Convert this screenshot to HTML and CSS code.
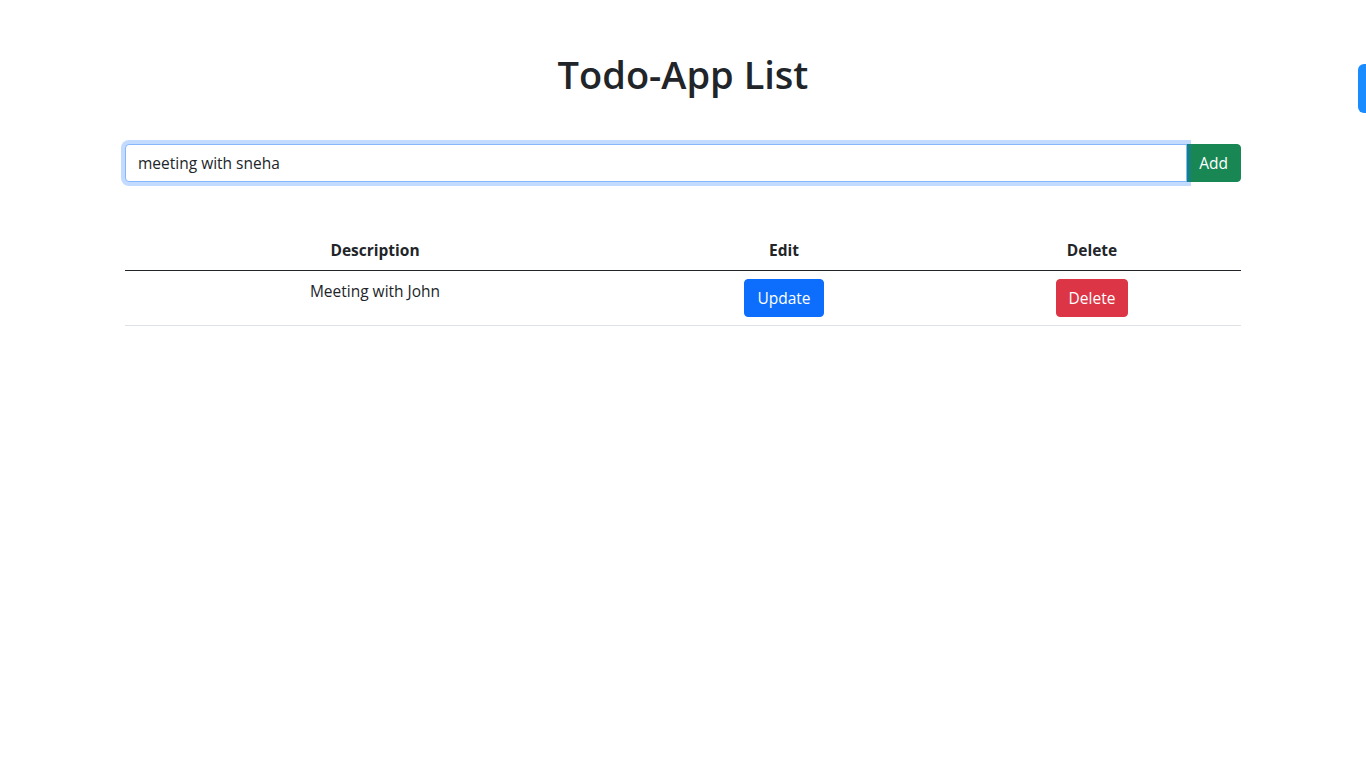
FILE: index.html
```html
<!DOCTYPE html>
<html lang="en">
<head>
<meta charset="utf-8">
<title>Todo-App List</title>
<link rel="stylesheet" href="styles.css">
</head>
<body>
<div class="container">
  <h1 class="title">Todo-App List</h1>
  <div class="input-group">
    <input class="form-control" type="text" value="meeting with sneha">
    <button class="btn btn-success add-btn">Add</button>
  </div>
  <table class="table">
    <thead>
      <tr>
        <th class="col-desc">Description</th>
        <th class="col-edit">Edit</th>
        <th class="col-del">Delete</th>
      </tr>
    </thead>
    <tbody>
      <tr>
        <td>Meeting with John</td>
        <td><button class="btn btn-primary">Update</button></td>
        <td><button class="btn btn-danger">Delete</button></td>
      </tr>
    </tbody>
  </table>
</div>
<div class="side-tab"></div>
</body>
</html>
```
FILE: styles.css
```css
* { box-sizing: border-box; }
html, body { margin: 0; padding: 0; }
body {
  font-family: "Open Sans", "Noto Sans", sans-serif;
  font-size: 15.5px;
  line-height: 24px;
  color: #212529;
  background: #fff;
}
.container {
  width: 1140px;
  margin: 0 auto;
  padding: 50px 12px 0;
}
.title {
  margin: 0 0 46px;
  font-size: 38px;
  font-weight: 600;
  line-height: 48px;
  text-align: center;
}
.input-group {
  display: flex;
  align-items: stretch;
}
.form-control {
  flex: 1;
  height: 38px;
  padding: 6px 12px;
  font: inherit;
  color: #212529;
  border: 1px solid #86b7fe;
  border-radius: 4px 0 0 4px;
  outline: 0;
  box-shadow: 0 0 0 4px rgba(13,110,253,.25);
  position: relative;
  z-index: 2;
}
.btn {
  display: inline-block;
  font: inherit;
  line-height: 24px;
  padding: 6px 12px;
  border: 1px solid transparent;
  border-radius: 4px;
  color: #fff;
  cursor: pointer;
}
.add-btn {
  border-radius: 0 4px 4px 0;
  margin-left: -1px;
}
.btn-success { background: #198754; border-color: #198754; }
.btn-primary { background: #0d6efd; border-color: #0d6efd; }
.btn-danger { background: #dc3545; border-color: #dc3545; }
.table {
  width: 100%;
  margin-top: 48px;
  border-collapse: collapse;
  text-align: center;
}
.table th, .table td {
  padding: 8px;
  vertical-align: top;
}
.table th {
  font-weight: 700;
  border-bottom: 1px solid #212529;
}
.table td { border-bottom: 1px solid #dee2e6; }
.col-desc { width: 500px; }
.col-edit { width: 318px; }
.col-del { width: 298px; }
.side-tab {
  position: fixed;
  right: 0;
  top: 64px;
  width: 8px;
  height: 49px;
  background: #1a8cff;
  border-radius: 6px 0 0 6px;
}
```
